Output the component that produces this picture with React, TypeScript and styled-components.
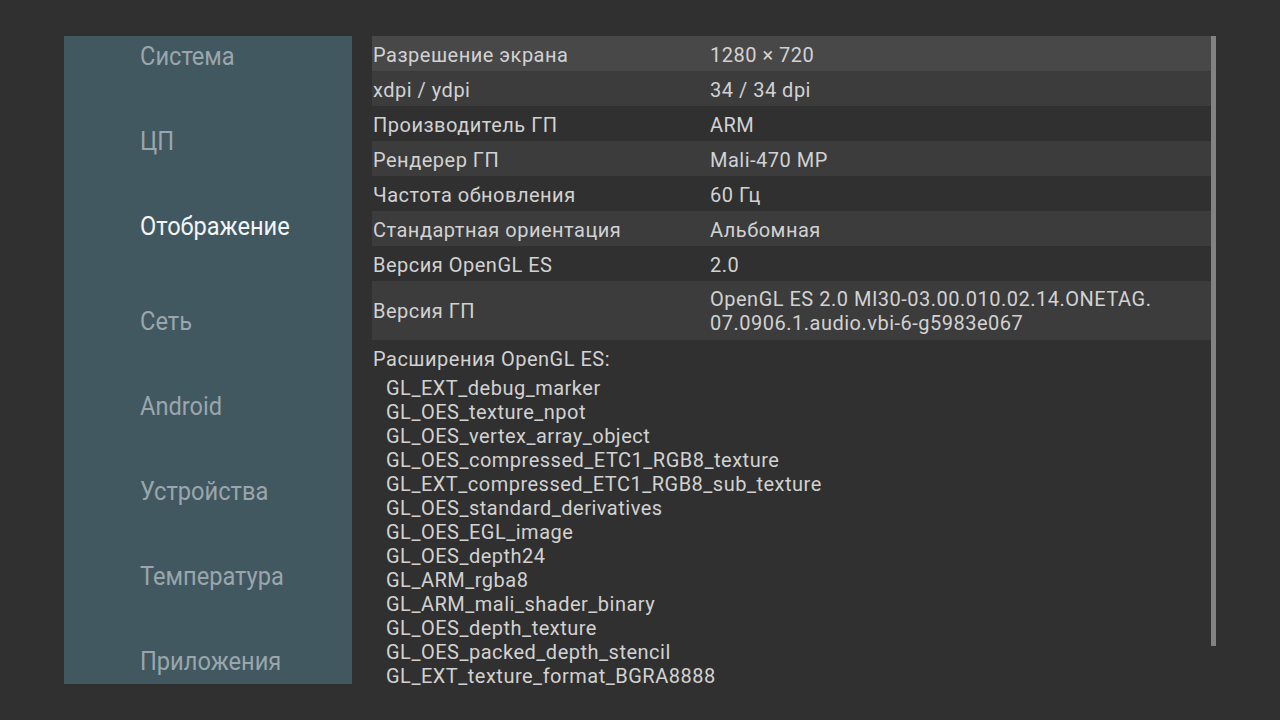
import styled, { createGlobalStyle } from "styled-components";

const GlobalStyle = createGlobalStyle`
  html, body {
    margin: 0;
    padding: 0;
    background: #303030;
    width: 1280px;
    height: 720px;
    overflow: hidden;
  }
  body {
    font-family: Roboto, "Noto Sans", sans-serif;
  }
`;

const Screen = styled.div`
  display: flex;
  align-items: flex-start;
  gap: 20px;
  padding: 36px 0 0 64px;
  height: 720px;
  box-sizing: border-box;
`;

const Sidebar = styled.nav`
  width: 288px;
  height: 648px;
  background: #425861;
  overflow: hidden;
  flex-shrink: 0;
`;

const MenuList = styled.ul`
  list-style: none;
  margin: -22px 0 0 0;
  padding: 0;
`;

// the selected entry keeps a little extra room under it
const MenuItem = styled.li<{ $active?: boolean }>`
  height: 85px;
  display: flex;
  align-items: center;
  padding-left: 76px;
  margin-bottom: ${(p) => (p.$active ? "10px" : "0")};
  font-size: 25px;
  color: ${(p) => (p.$active ? "#f2f4f5" : "#9aa6ab")};
`;

const MenuLabel = styled.span`
  display: inline-block;
  transform: scaleX(0.945);
  transform-origin: left center;
  white-space: nowrap;
`;

const Content = styled.section`
  display: flex;
  width: 844px;
`;

const Body = styled.div`
  flex: 1;
  color: #d2d2d2;
  font-size: 20px;
  letter-spacing: 0.5px;
`;

const Row = styled.div<{ $shade: "focus" | "light" | "dark" }>`
  display: grid;
  grid-template-columns: 337px 1fr;
  align-items: center;
  height: 35px;
  box-sizing: border-box;
  padding: 2px 1px 0;
  line-height: 24px;
  background: ${(p) =>
    p.$shade === "focus" ? "#484848" : p.$shade === "light" ? "#3c3c3c" : "transparent"};
`;

const TallRow = styled(Row)`
  height: 59px;
  padding-top: 6px;
  padding-bottom: 5px;
`;

const Cell = styled.div`
  white-space: nowrap;
`;

const Heading = styled.div`
  margin-top: 7px;
  padding-left: 1px;
  line-height: 24px;
`;

const ExtList = styled.div`
  margin-top: 5px;
  padding-left: 14px;
  line-height: 24px;
`;

const Track = styled.div`
  width: 5px;
  flex-shrink: 0;
  display: flex;
  flex-direction: column;
`;

const Thumb = styled.div`
  height: 610px;
  background: rgba(255, 255, 255, 0.4);
`;

const menu = [
  "Система",
  "ЦП",
  "Отображение",
  "Сеть",
  "Android",
  "Устройства",
  "Температура",
  "Приложения",
];

const rows: [string, string][] = [
  ["Разрешение экрана", "1280 × 720"],
  ["xdpi / ydpi", "34 / 34 dpi"],
  ["Производитель ГП", "ARM"],
  ["Рендерер ГП", "Mali-470 MP"],
  ["Частота обновления", "60 Гц"],
  ["Стандартная ориентация", "Альбомная"],
  ["Версия OpenGL ES", "2.0"],
];

const extensions = [
  "GL_EXT_debug_marker",
  "GL_OES_texture_npot",
  "GL_OES_vertex_array_object",
  "GL_OES_compressed_ETC1_RGB8_texture",
  "GL_EXT_compressed_ETC1_RGB8_sub_texture",
  "GL_OES_standard_derivatives",
  "GL_OES_EGL_image",
  "GL_OES_depth24",
  "GL_ARM_rgba8",
  "GL_ARM_mali_shader_binary",
  "GL_OES_depth_texture",
  "GL_OES_packed_depth_stencil",
  "GL_EXT_texture_format_BGRA8888",
];

function shadeFor(idx: number) {
  if (idx === 0) return "focus";
  return idx % 2 === 1 ? "light" : "dark";
}

function App() {
  return (
    <>
      <GlobalStyle />
      <Screen>
        <Sidebar>
          <MenuList>
            {menu.map((item) => (
              <MenuItem key={item} $active={item === "Отображение"}>
                <MenuLabel>{item}</MenuLabel>
              </MenuItem>
            ))}
          </MenuList>
        </Sidebar>
        <Content>
          <Body>
            {rows.map(([label, value], idx) => (
              <Row key={label} $shade={shadeFor(idx)}>
                <Cell>{label}</Cell>
                <Cell>{value}</Cell>
              </Row>
            ))}
            <TallRow $shade="light">
              <Cell>Версия ГП</Cell>
              <Cell>
                OpenGL ES 2.0 MI30-03.00.010.02.14.ONETAG.
                <br />
                07.0906.1.audio.vbi-6-g5983e067
              </Cell>
            </TallRow>
            <Heading>Расширения OpenGL ES:</Heading>
            <ExtList>
              {extensions.map((ext) => (
                <div key={ext}>{ext}</div>
              ))}
            </ExtList>
          </Body>
          <Track>
            <Thumb />
          </Track>
        </Content>
      </Screen>
    </>
  );
}

export default App;
